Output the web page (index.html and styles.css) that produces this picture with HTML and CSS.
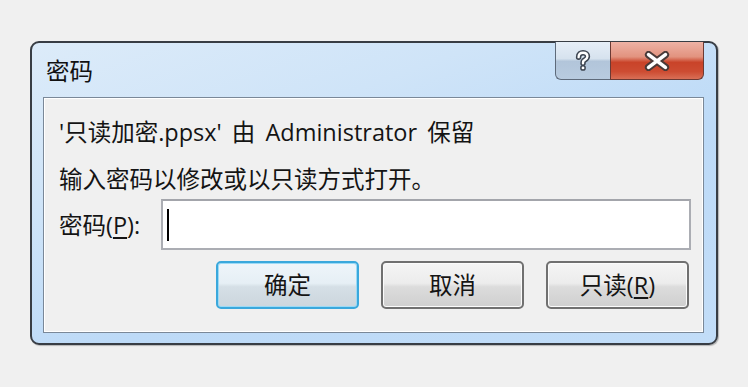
FILE: index.html
```html
<!DOCTYPE html>
<html lang="zh-CN">
<head>
<meta charset="utf-8">
<title>密码</title>
<link rel="stylesheet" href="styles.css">
</head>
<body>
<div class="window">
  <div class="titlebar">
    <div class="title">密码</div>
    <div class="caption">
      <div class="cap-btn help">
        <svg width="16" height="22" viewBox="0 0 14 20">
          <path d="M3 6.5 C3 3.5 5 2.5 7 2.5 C9.5 2.5 11 4 11 6 C11 8 9 8.7 7.5 9.8 C7 10.2 7 11 7 12" fill="none" stroke="#3c4450" stroke-width="5" stroke-linecap="round"/>
          <circle cx="7" cy="16.3" r="2.6" fill="#3c4450"/>
          <path d="M3 6.5 C3 3.5 5 2.5 7 2.5 C9.5 2.5 11 4 11 6 C11 8 9 8.7 7.5 9.8 C7 10.2 7 11 7 12" fill="none" stroke="#ffffff" stroke-width="2.2" stroke-linecap="round"/>
          <circle cx="7" cy="16.3" r="1.3" fill="#ffffff"/>
        </svg>
      </div>
      <div class="cap-btn close">
        <svg width="28" height="20" viewBox="0 0 26 19">
          <path d="M5 3.5 L21 15.5 M21 3.5 L5 15.5" fill="none" stroke="#4a3a38" stroke-width="7" stroke-linecap="round"/>
          <path d="M5 3.5 L21 15.5 M21 3.5 L5 15.5" fill="none" stroke="#ffffff" stroke-width="3.4" stroke-linecap="round"/>
        </svg>
      </div>
    </div>
  </div>
  <div class="client">
    <p class="msg msg-first">'只读加密.ppsx' 由 Administrator 保留</p>
    <p class="msg msg-second">输入密码以修改或以只读方式打开。</p>
    <div class="field-row">
      <label class="field-label" for="pw">密码(<u>P</u>):</label>
      <div class="textbox" id="pw"><span class="caret"></span></div>
    </div>
    <div class="button-row">
      <div class="btn btn-default">确定</div>
      <div class="btn">取消</div>
      <div class="btn">只读(<u>R</u>)</div>
    </div>
  </div>
</div>
</body>
</html>
```

FILE: styles.css
```css
* { box-sizing: border-box; }

html, body {
  margin: 0;
  padding: 0;
  background: #f0f0f0;
}

body {
  width: 748px;
  height: 387px;
  overflow: hidden;
  font-family: "Open Sans", "Noto Sans CJK SC", sans-serif;
  color: #141414;
  padding: 41px 0 0 30px;
}

.window {
  width: 688px;
  height: 304px;
  border: 2px solid #383d44;
  border-radius: 9px;
  background: linear-gradient(160deg, #dcebf9 0%, #cfe4f8 30%, #bddaf7 60%, #c2ddf8 100%);
  box-shadow: 1px 1px 1px rgba(0,0,0,0.25);
}

.titlebar {
  display: flex;
  align-items: flex-start;
  height: 54px;
  padding-left: 14px;
}

.title {
  font-size: 23.5px;
  line-height: 30px;
  margin-top: 13px;
  color: #111;
}

.caption {
  display: flex;
  margin-left: auto;
  margin-right: 12px;
  margin-top: -1px;
}

.cap-btn {
  height: 38px;
  display: flex;
  align-items: center;
  justify-content: center;
  border: 1px solid #5e6a7a;
  border-top: none;
}

.help {
  width: 55px;
  border-right: none;
  border-radius: 0 0 0 6px;
  background: linear-gradient(180deg, #e6eef7 0%, #d6e2ee 45%, #b2c5da 52%, #b8cbdf 100%);
}

.close {
  width: 94px;
  border-color: #6b3a34;
  border-radius: 0 0 6px 0;
  background: linear-gradient(180deg, #eeb2a5 0%, #e2937f 40%, #c94329 55%, #cd4c32 80%, #d96f56 100%);
}

.client {
  margin: 0 12px 0 11px;
  height: 236px;
  border: 1px solid #7a8898;
  box-shadow: inset 1px 1px 0 #ffffff, inset -1px -1px 0 #ffffff;
  background: #f0f0f0;
  padding: 19px 12px 0 15px;
}

.msg {
  margin: 0;
  font-size: 23.5px;
  line-height: 30px;
  white-space: nowrap;
}

.msg-first {
  word-spacing: 4px;
}

.msg-second {
  margin-top: 17px;
}

.field-row {
  display: flex;
  align-items: center;
  margin-top: 5px;
}

.field-label {
  font-size: 23.5px;
  line-height: 30px;
  width: 102px;
  flex: none;
}

.textbox {
  flex: 1;
  height: 51px;
  background: #ffffff;
  border: 2px solid #abadb3;
  border-top-color: #a3a5ab;
  display: flex;
  align-items: center;
  padding-left: 4px;
}

.caret {
  width: 2px;
  height: 32px;
  background: #000;
}

.button-row {
  display: flex;
  justify-content: flex-end;
  gap: 22px;
  margin-top: 11px;
  padding-right: 2px;
}

.btn {
  width: 143px;
  height: 48px;
  border: 2px solid #707070;
  border-radius: 5px;
  background: linear-gradient(180deg, #f5f5f5 0%, #ececec 46%, #dcdcdc 54%, #cfcfcf 100%);
  box-shadow: inset 0 0 0 1px #fbfbfb;
  font-size: 23.5px;
  line-height: 44px;
  text-align: center;
  color: #141414;
}

.btn-default {
  border-color: #3aa8dc;
  box-shadow: inset 0 0 0 1px #9bdaf6;
  background: linear-gradient(180deg, #eef5fa 0%, #e6eff5 46%, #d5dfe6 54%, #ccd6dd 100%);
}

u {
  text-decoration: underline;
  text-underline-offset: 3px;
}
```
